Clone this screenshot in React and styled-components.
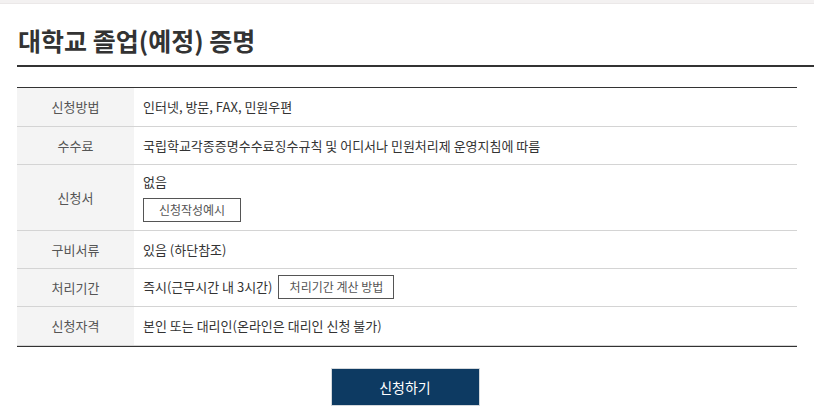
import React from "react";
import styled, { createGlobalStyle } from "styled-components";

const GlobalStyle = createGlobalStyle`
  html, body {
    margin: 0;
    padding: 0;
    background: #fff;
  }
  body {
    font-family: "Noto Sans CJK KR", "Noto Sans", sans-serif;
    color: #333;
  }
`;

const TopStrip = styled.div`
  height: 3px;
  background: #f3f1f1;
  border-bottom: 1px solid #ebe8e8;
`;

const Page = styled.div`
  padding-left: 17px;
`;

const TitleBar = styled.div`
  border-bottom: 2px solid #333;
  padding: 20px 0 9px 1px;
`;

const Title = styled.h2`
  margin: 0;
  font-size: 25px;
  font-weight: 700;
  line-height: 32px;
  color: #333;
`;

const Content = styled.div`
  margin-right: 17px;
  padding-top: 20px;
`;

const Table = styled.div`
  border-top: 1px solid #333;
  border-bottom: 1px solid #333;
`;

const Row = styled.div`
  display: grid;
  grid-template-columns: 117px 1fr;
  border-bottom: 1px solid #d4d4d4;
`;

const Head = styled.div`
  background: #f4f4f4;
  display: flex;
  align-items: center;
  justify-content: center;
  font-size: 13px;
  color: #555;
`;

const Cell = styled.div`
  padding: ${(p) => p.$pad};
  font-size: 13px;
  line-height: 21.5px;
  color: #333;
  display: flex;
  flex-direction: ${(p) => (p.$tall ? "column" : "row")};
  align-items: ${(p) => (p.$tall ? "flex-start" : "center")};
  gap: ${(p) => (p.$tall ? "5px" : "6px")};
`;

const OutlineButton = styled.button`
  width: ${(p) => p.$width}px;
  height: 24px;
  padding: 0;
  border: 1px solid #555;
  background: #fff;
  color: #555;
  font-family: inherit;
  font-size: 12px;
  line-height: 22px;
  cursor: pointer;
`;

const Actions = styled.div`
  display: flex;
  justify-content: center;
  padding-top: 21px;
  padding-right: 4px;
`;

const SubmitButton = styled.button`
  width: 149px;
  height: 38px;
  background: #0d3a62;
  border: 1px solid #d4d8dc;
  color: #fff;
  font-family: inherit;
  font-size: 14px;
  cursor: pointer;
`;

const rows = [
  { head: "신청방법", body: "인터넷, 방문, FAX, 민원우편" },
  {
    head: "수수료",
    body: "국립학교각종증명수수료징수규칙 및 어디서나 민원처리제 운영지침에 따름",
  },
  { head: "신청서", body: "없음", button: "신청작성예시", width: 98, tall: true },
  { head: "구비서류", body: "있음 (하단참조)" },
  { head: "처리기간", body: "즉시(근무시간 내 3시간)", button: "처리기간 계산 방법", width: 116 },
  { head: "신청자격", body: "본인 또는 대리인(온라인은 대리인 신청 불가)" },
];

const cellPadding = (row) => {
  if (row.tall) return "6px 9px 8px";
  if (row.button) return "6px 9px 7px";
  return "8px 9px";
};

const App = () => {
  return (
    <>
      <GlobalStyle />
      <TopStrip />
      <Page>
        <TitleBar>
          <Title>대학교 졸업(예정) 증명</Title>
        </TitleBar>
        <Content>
          <Table>
            {rows.map((row) => (
              <Row key={row.head}>
                <Head>{row.head}</Head>
                <Cell $tall={row.tall} $pad={cellPadding(row)}>
                  <span>{row.body}</span>
                  {row.button && <OutlineButton $width={row.width}>{row.button}</OutlineButton>}
                </Cell>
              </Row>
            ))}
          </Table>
          <Actions>
            <SubmitButton>신청하기</SubmitButton>
          </Actions>
        </Content>
      </Page>
    </>
  );
};

export default App;
